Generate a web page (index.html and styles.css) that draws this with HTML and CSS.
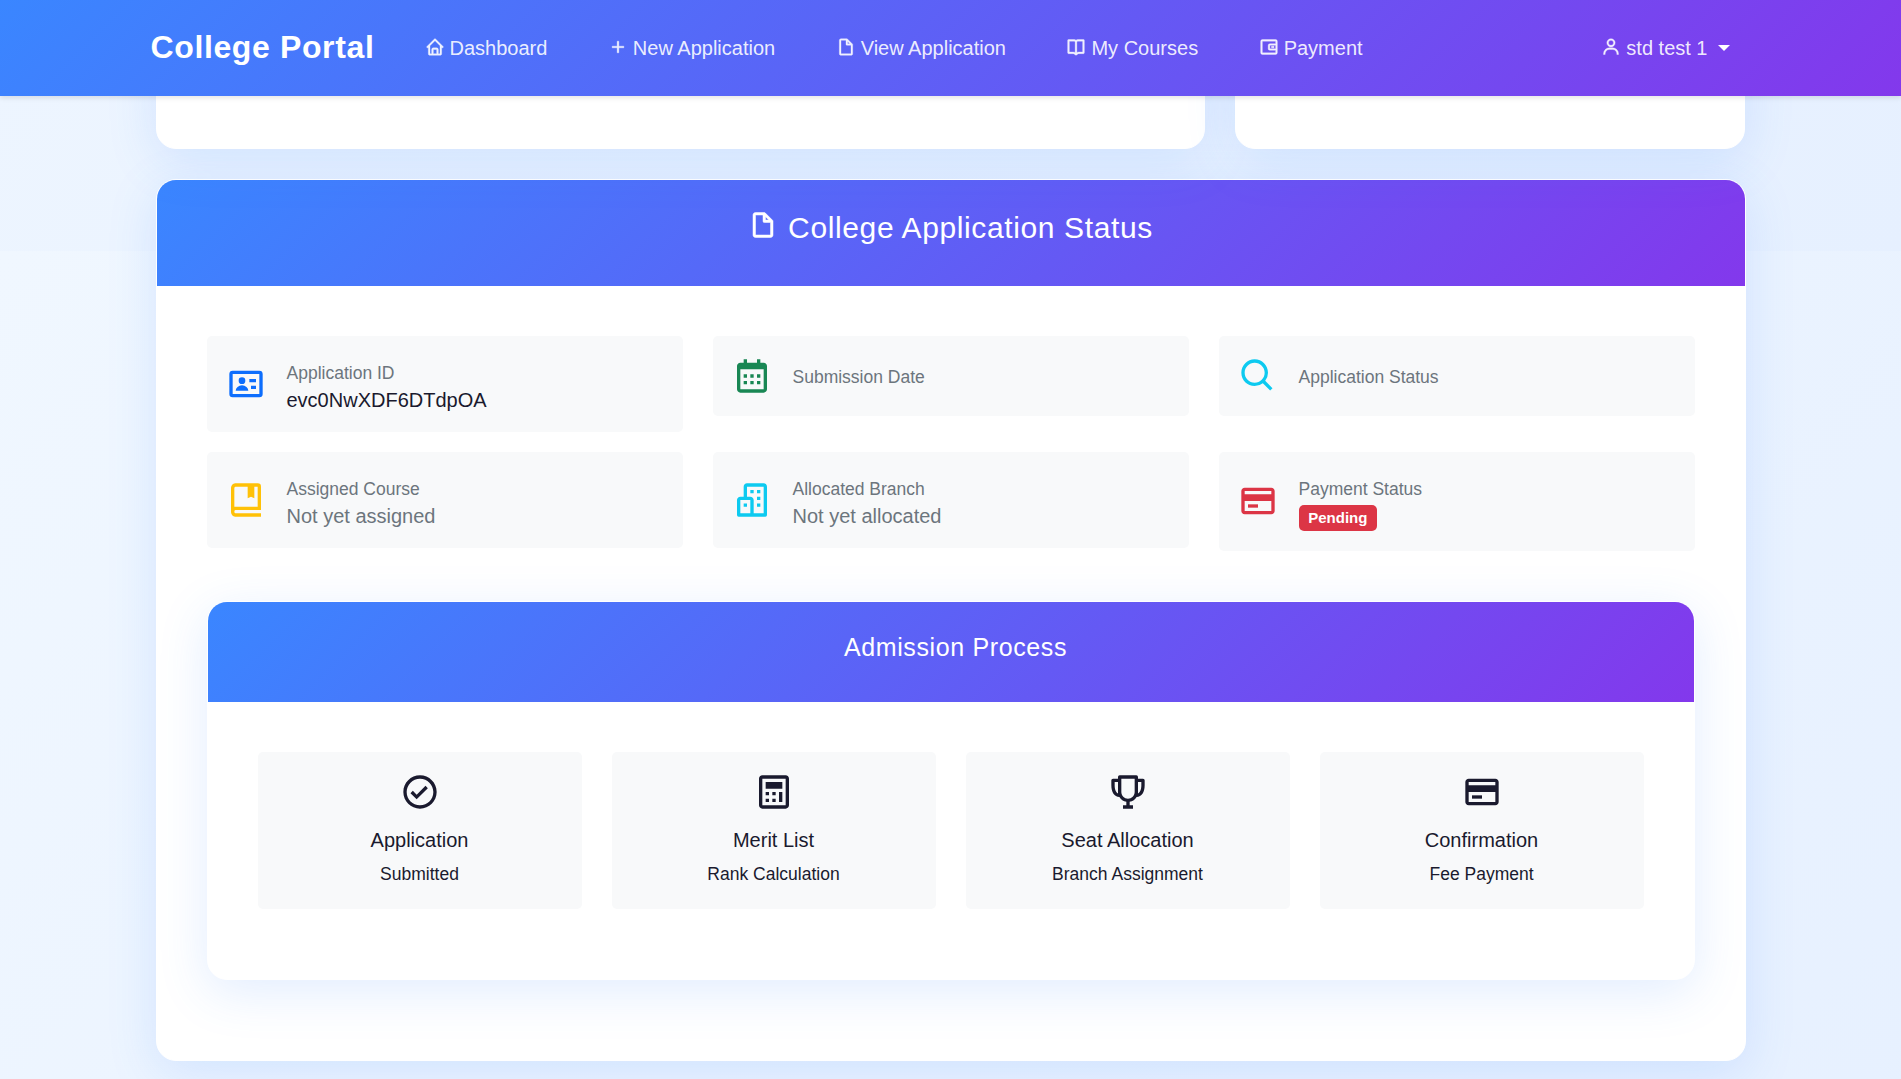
FILE: index.html
```html
<!DOCTYPE html>
<html lang="en">
<head>
<meta charset="utf-8">
<title>College Portal</title>
<link rel="stylesheet" href="styles.css">
</head>
<body>
<svg class="sprite" aria-hidden="true">
  <symbol id="i-home" viewBox="0 0 24 24"><path d="M3 13h1v7c0 1.103.897 2 2 2h12c1.103 0 2-.897 2-2v-7h1a1 1 0 0 0 .707-1.707l-9-9a.999.999 0 0 0-1.414 0l-9 9A1 1 0 0 0 3 13zm7 7v-5h4v5h-4zm2-15.586 6 6V15l.001 5H16v-5c0-1.103-.897-2-2-2h-4c-1.103 0-2 .897-2 2v5H6v-9.586l6-6z"/></symbol>
  <symbol id="i-plus" viewBox="0 0 24 24"><path d="M19 11h-6V5h-2v6H5v2h6v6h2v-6h6z"/></symbol>
  <symbol id="i-file" viewBox="0 0 24 24"><path d="M19.903 8.586a.997.997 0 0 0-.196-.293l-6-6a.997.997 0 0 0-.293-.196c-.03-.014-.062-.022-.094-.033a.991.991 0 0 0-.259-.051C13.04 2.011 13.021 2 13 2H6c-1.103 0-2 .897-2 2v16c0 1.103.897 2 2 2h12c1.103 0 2-.897 2-2V9c0-.021-.011-.04-.013-.062a.952.952 0 0 0-.051-.259c-.01-.032-.019-.063-.033-.093zM16.586 8H14V5.414L16.586 8zM6 20V4h6v5a1 1 0 0 0 1 1h5l.002 10H6z"/></symbol>
  <symbol id="i-book" viewBox="0 0 24 24"><path d="M21 3h-7a2.98 2.98 0 0 0-2 .78A2.98 2.98 0 0 0 10 3H3a1 1 0 0 0-1 1v15a1 1 0 0 0 1 1h5.758a2.01 2.01 0 0 1 1.414.586l1.121 1.121c.009.009.021.012.03.021.086.079.182.149.294.196h.002a.996.996 0 0 0 .762 0h.002c.112-.047.208-.117.294-.196.009-.009.021-.012.03-.021l1.121-1.121A2.01 2.01 0 0 1 15.242 20H21a1 1 0 0 0 1-1V4a1 1 0 0 0-1-1zM8.758 18H4V5h6c.552 0 1 .449 1 1v12.689A4.032 4.032 0 0 0 8.758 18zM20 18h-4.758c-.799 0-1.584.246-2.242.689V6c0-.551.448-1 1-1h6v13z"/></symbol>
  <symbol id="i-wallet" viewBox="0 0 24 24"><path fill-rule="evenodd" d="M4 3h16a2 2 0 0 1 2 2v14a2 2 0 0 1-2 2H4a2 2 0 0 1-2-2V5a2 2 0 0 1 2-2zm0 2v14h16v-3h-7a2 2 0 0 1-2-2v-4a2 2 0 0 1 2-2h7V5zm9 5v4h7v-4zm2 1h3v2h-3z"/></symbol>
  <symbol id="i-user" viewBox="0 0 24 24"><path d="M12 2a5 5 0 1 0 5 5 5 5 0 0 0-5-5zm0 8a3 3 0 1 1 3-3 3 3 0 0 1-3 3zm9 11v-1a7 7 0 0 0-7-7h-4a7 7 0 0 0-7 7v1h2v-1a5 5 0 0 1 5-5h4a5 5 0 0 1 5 5v1z"/></symbol>
  <symbol id="i-id" viewBox="0 0 24 24"><path fill-rule="evenodd" d="M4 4h16a2 2 0 0 1 2 2v12a2 2 0 0 1-2 2H4a2 2 0 0 1-2-2V6a2 2 0 0 1 2-2zm0 2v12h16V6zm1.800 10a3.800 3.200 0 0 1 7.600 0zm3.800-4a2 2 0 1 1 0-4 2 2 0 0 1 0 4zM14 9h4v2h-4zm1 4h3v2h-3z"/></symbol>
  <symbol id="i-calendar" viewBox="0 0 24 24"><path d="M7 11h2v2H7zm0 4h2v2H7zm4-4h2v2h-2zm0 4h2v2h-2zm4-4h2v2h-2zm0 4h2v2h-2z"/><path d="M5 22h14c1.103 0 2-.897 2-2V6c0-1.103-.897-2-2-2h-2V2h-2v2H9V2H7v2H5c-1.103 0-2 .897-2 2v14c0 1.103.897 2 2 2zM19 8l.001 12H5V8h14z"/></symbol>
  <symbol id="i-search" viewBox="0 0 24 24"><path d="M10 18a7.952 7.952 0 0 0 4.897-1.688l4.396 4.396 1.414-1.414-4.396-4.396A7.952 7.952 0 0 0 18 10c0-4.411-3.589-8-8-8s-8 3.589-8 8 3.589 8 8 8zm0-14c3.309 0 6 2.691 6 6s-2.691 6-6 6-6-2.691-6-6 2.691-6 6-6z"/></symbol>
  <symbol id="i-mark" viewBox="0 0 24 24"><path d="M6.012 18H21V4a2 2 0 0 0-2-2H6c-1.206 0-3 .799-3 3v14c0 2.201 1.794 3 3 3h15v-2H6.012C5.55 19.988 5 19.805 5 19s.55-.988 1.012-1zM5 16V5c0-.805.55-.988 1-1h7v7l2-1 2 1V4h2v12z"/></symbol>
  <symbol id="i-building" viewBox="0 0 24 24"><path d="M19 2H9c-1.103 0-2 .897-2 2v6H5c-1.103 0-2 .897-2 2v9a1 1 0 0 0 1 1h16a1 1 0 0 0 1-1V4c0-1.103-.897-2-2-2zM5 12h6v8H5v-8zm14 8h-6v-8c0-1.103-.897-2-2-2H9V4h10v16z"/><path d="M11 6h2v2h-2zm4 0h2v2h-2zm0 4.031h2V12h-2zm0 4h2V16h-2zm-8 0h2V16H7z"/></symbol>
  <symbol id="i-card" viewBox="0 0 24 24"><path d="M20 4H4c-1.103 0-2 .897-2 2v12c0 1.103.897 2 2 2h16c1.103 0 2-.897 2-2V6c0-1.103-.897-2-2-2zM4 6h16v2H4V6zm0 12v-6h16.001l.001 6H4z"/><path d="M6 14h6v2H6z"/></symbol>
  <symbol id="i-check" viewBox="0 0 24 24"><path d="M12 2C6.486 2 2 6.486 2 12s4.486 10 10 10 10-4.486 10-10S17.514 2 12 2zm0 18c-4.411 0-8-3.589-8-8s3.589-8 8-8 8 3.589 8 8-3.589 8-8 8z"/><path d="M9.999 13.587 7.7 11.292l-1.412 1.416 3.713 3.705 6.706-6.706-1.414-1.414z"/></symbol>
  <symbol id="i-calc" viewBox="0 0 24 24"><path d="M19 2H5c-1.103 0-2 .897-2 2v16c0 1.103.897 2 2 2h14c1.103 0 2-.897 2-2V4c0-1.103-.897-2-2-2zM5 20V4h14l.001 16H5z"/><path d="M7 12h2v2H7zm0 4h2v2H7zm4-4h2v2h-2zm0 4h2v2h-2zm4-4h2v6h-2zM7 6h10v4H7z"/></symbol>
  <symbol id="i-trophy" viewBox="0 0 24 24"><path d="M21 4h-3V3a1 1 0 0 0-1-1H7a1 1 0 0 0-1 1v1H3a1 1 0 0 0-1 1v3c0 4.31 1.799 6.91 4.819 7.012A6.001 6.001 0 0 0 11 17.91V20H9v2h6v-2h-2v-2.090a6.010 6.010 0 0 0 4.181-2.898C20.201 14.91 22 12.31 22 8V5a1 1 0 0 0-1-1zM4 8V6h2v6.830C4.216 12.078 4 9.299 4 8zm8 8c-2.206 0-4-1.794-4-4V4h8v8c0 2.206-1.794 4-4 4zm6-3.170V6h2v2c0 1.299-.216 4.078-2 4.830z"/></symbol>
</svg>

<header class="navbar">
  <div class="nav-inner">
    <a class="brand">College Portal</a>
    <nav class="links">
      <a class="link"><svg class="ico"><use href="#i-home"/></svg>Dashboard</a>
      <a class="link"><svg class="ico"><use href="#i-plus"/></svg>New Application</a>
      <a class="link"><svg class="ico"><use href="#i-file"/></svg>View Application</a>
      <a class="link"><svg class="ico"><use href="#i-book"/></svg>My Courses</a>
      <a class="link"><svg class="ico"><use href="#i-wallet"/></svg>Payment</a>
    </nav>
    <a class="link user"><svg class="ico"><use href="#i-user"/></svg>std test 1<span class="caret"></span></a>
  </div>
</header>

<main class="page">
  <div class="top-row">
    <section class="card stub"></section>
    <section class="card stub"></section>
  </div>

  <section class="card">
    <div class="card-head"><h4><svg class="ico"><use href="#i-file"/></svg>College Application Status</h4></div>
    <div class="card-body">
      <div class="status-grid">
        <div class="info"><svg class="ico blue"><use href="#i-id"/></svg><div><small>Application ID</small><h6>evc0NwXDF6DTdpOA</h6></div></div>
        <div class="info"><svg class="ico green"><use href="#i-calendar"/></svg><div><small>Submission Date</small></div></div>
        <div class="info"><svg class="ico cyan"><use href="#i-search"/></svg><div><small>Application Status</small></div></div>
        <div class="info"><svg class="ico amber"><use href="#i-mark"/></svg><div><small>Assigned Course</small><h6 class="muted">Not yet assigned</h6></div></div>
        <div class="info"><svg class="ico cyan"><use href="#i-building"/></svg><div><small>Allocated Branch</small><h6 class="muted">Not yet allocated</h6></div></div>
        <div class="info"><svg class="ico red"><use href="#i-card"/></svg><div><small>Payment Status</small><span class="badge">Pending</span></div></div>
      </div>

      <section class="card inner">
        <div class="card-head"><h5>Admission Process</h5></div>
        <div class="card-body">
          <div class="steps">
            <div class="step"><svg class="ico"><use href="#i-check"/></svg><h6>Application</h6><small>Submitted</small></div>
            <div class="step"><svg class="ico"><use href="#i-calc"/></svg><h6>Merit List</h6><small>Rank Calculation</small></div>
            <div class="step"><svg class="ico"><use href="#i-trophy"/></svg><h6>Seat Allocation</h6><small>Branch Assignment</small></div>
            <div class="step"><svg class="ico"><use href="#i-card"/></svg><h6>Confirmation</h6><small>Fee Payment</small></div>
          </div>
        </div>
      </section>
    </div>
  </section>
</main>
</body>
</html>
```

FILE: styles.css
```css
* { box-sizing: border-box; }

html, body { height: 100%; }

body {
  margin: 0;
  overflow: hidden;
  display: flex;
  flex-direction: column;
  font: 20px/32px "Liberation Sans", Arial, sans-serif;
  color: #1a1a2e;
  background: linear-gradient(135deg, #f0f7ff 0%, #e6f0ff 100%) 0 251px / 100% 1079px repeat;
}

h4, h5, h6 { margin: 0; font-weight: 400; }
h6 { font-size: 20px; line-height: 24px; }
small { display: block; margin-bottom: -2px; font-size: 17.5px; line-height: 34px; }

.sprite { display: none; }
.ico { display: block; flex: none; width: 1em; height: 1em; fill: currentColor; }

/* Navigation */
.navbar {
  position: relative;
  z-index: 2;
  flex: none;
  height: 96px;
  background: linear-gradient(135deg, #3a86ff, #8338ec);
  box-shadow: 0 2px 5px rgba(0, 0, 0, 0.1);
}
.nav-inner {
  width: 1650px;
  height: 96px;
  margin: 0 auto;
  padding: 0 46px 0 25px;
  display: flex;
  align-items: center;
}
.brand {
  width: 274px;
  padding-bottom: 3px;
  font-size: 32px;
  font-weight: 700;
  letter-spacing: 0.625px;
  color: #fff;
  white-space: nowrap;
}
.links { display: flex; gap: 60.5px; }
.link {
  display: flex;
  align-items: center;
  gap: 5px;
  color: rgba(255, 255, 255, 0.9);
  white-space: nowrap;
}
.link .ico { margin-bottom: 3px; }
.link .ico, .card-head .ico { stroke: currentColor; stroke-width: 0.4px; }
.user { margin-left: auto; }
.caret {
  margin: 0 0 1px 5px;
  border: 6px solid transparent;
  border-top-color: #fff;
  border-bottom: 0;
}

/* Cards */
.page {
  flex: none;
  width: 1590px;
  margin: 0 auto;
}
.card {
  border: 1px solid #fff;
  border-radius: 20px;
  background: #fff;
  box-shadow: 0 12px 50px rgba(58, 134, 255, 0.15);
}
.top-row {
  display: grid;
  grid-template-columns: 1049px 510px;
  gap: 30px;
  height: 53px;
  margin-bottom: 30px;
}
.stub { height: 253px; margin-top: -200px; }
.card-head {
  padding: 30px 0 40px;
  border-radius: 19px 19px 0 0;
  text-align: center;
  color: #fff;
  background: linear-gradient(135deg, #3a86ff, #8338ec);
}
.card-head h4 {
  display: flex;
  justify-content: center;
  gap: 10px;
  font-size: 30px;
  line-height: 36px;
  letter-spacing: 0.625px;
}
.card-head h5 {
  padding-left: 10px;
  font-size: 25px;
  line-height: 30px;
  letter-spacing: 0.625px;
}
.card-body { padding: 50px; }

/* Application details */
.status-grid {
  display: grid;
  grid-template-columns: repeat(3, 1fr);
  align-items: start;
  gap: 20px 30px;
}
.info {
  display: flex;
  align-items: center;
  gap: 20px;
  padding: 20px;
  border-radius: 5px;
  background: #f8f9fa;
}
.info .ico { margin: -1px 0.5px 0 -0.5px; font-size: 40px; }
.info small, .muted { color: #6c757d; }
.blue { color: #0d6efd; }
.green { color: #198754; }
.cyan { color: #0dcaf0; }
.amber { color: #ffc107; }
.red { color: #dc3545; }
.badge {
  display: block;
  width: max-content;
  margin-top: 1px;
  padding: 5px 9.75px;
  border-radius: 5px;
  background: #dc3545;
  color: #fff;
  font-size: 15px;
  line-height: 16px;
  font-weight: 700;
}
/* A lone label keeps the tile as tall as its icon */
.info { min-height: 80px; }

/* Admission steps */
.inner { margin: 50px 0 30px; }
.steps {
  display: grid;
  grid-template-columns: repeat(4, 1fr);
  gap: 30px;
  margin-bottom: 20px;
}
.step {
  padding: 20px;
  border-radius: 5px;
  background: #f8f9fa;
  text-align: center;
}
.step .ico { margin: 0 auto 16px; font-size: 40px; }
.step h6 { margin-bottom: 5px; }
```
